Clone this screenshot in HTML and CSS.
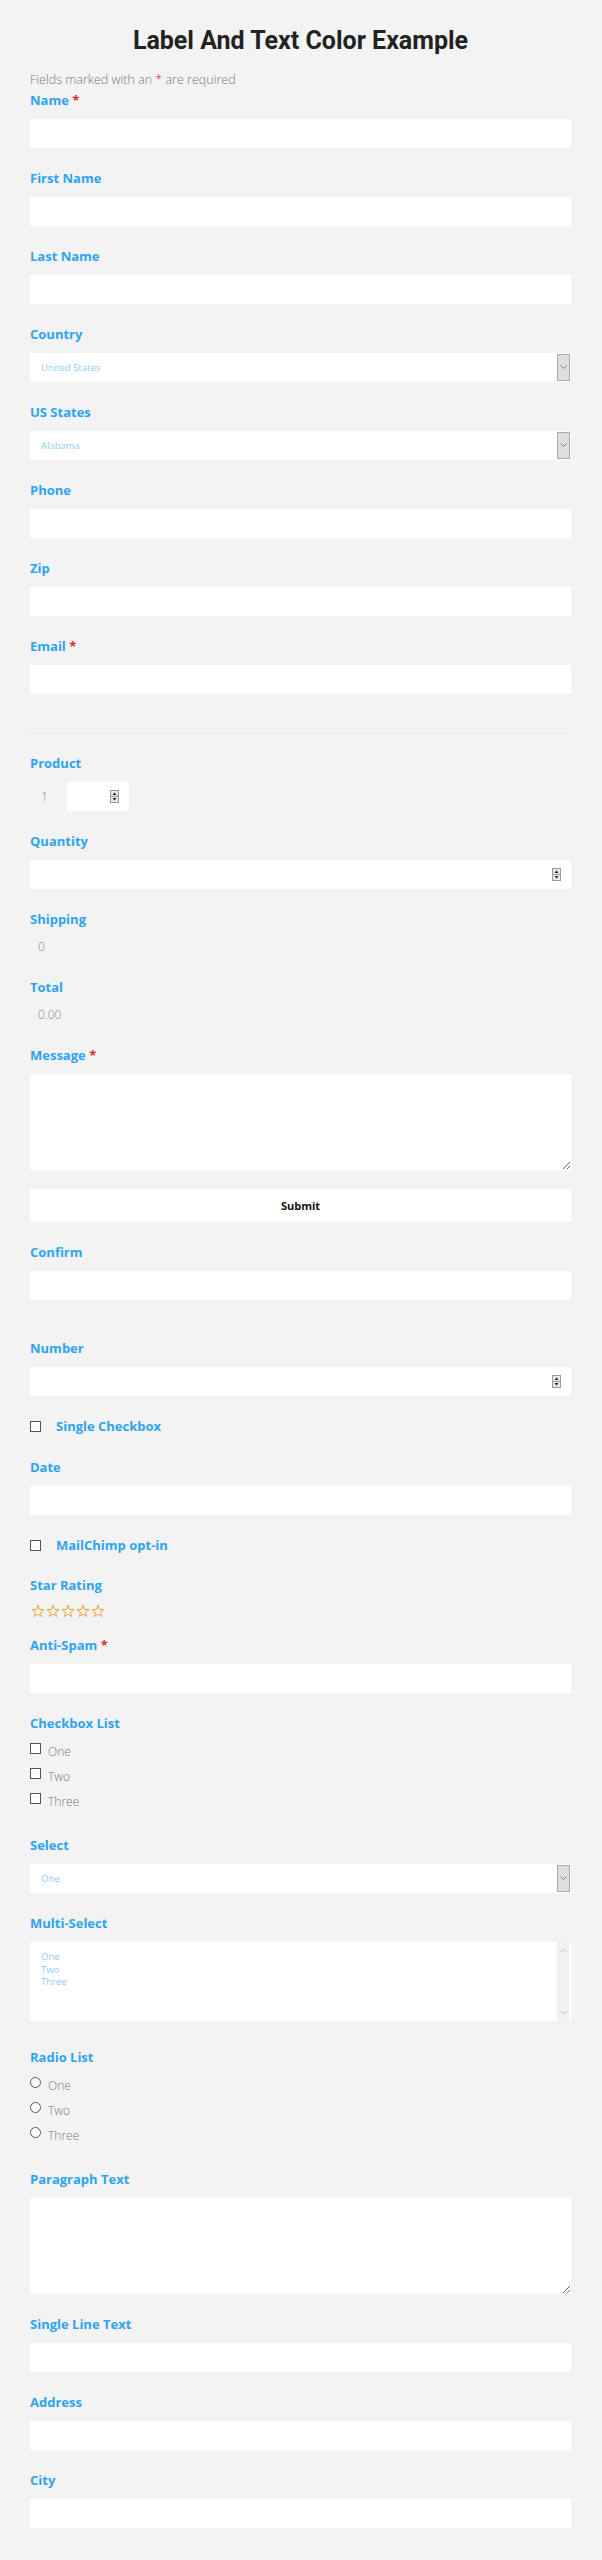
FILE: index.html
```html
<!DOCTYPE html>
<html>

<head>
    <meta name="viewport" content="width=device-width, initial-scale=1.0">
    <title>Label And Text Color Example</title>
    <link rel="stylesheet" href="styles.css">
</head>

<body>
    <div class="page">
        <h1 class="title">Label And Text Color Example</h1>
        <p class="note">Fields marked with an <span class="req">*</span> are required</p>

        <form class="form" action="">
            <div class="field">
                <label class="label">Name <span class="req">*</span></label>
                <input class="text-input" type="text">
            </div>
            <div class="field">
                <label class="label">First Name</label>
                <input class="text-input" type="text">
            </div>
            <div class="field">
                <label class="label">Last Name</label>
                <input class="text-input" type="text">
            </div>
            <div class="field">
                <label class="label">Country</label>
                <div class="select-box">
                    <select class="select"><option>United States</option></select>
                    <span class="select-arrow"><svg width="7" height="5" viewBox="0 0 7 5"><path d="M0.5 0.5 L3.5 3.5 L6.5 0.5" fill="none" stroke="#7a7a7a"/></svg></span>
                </div>
            </div>
            <div class="field">
                <label class="label">US States</label>
                <div class="select-box">
                    <select class="select"><option>Alabama</option></select>
                    <span class="select-arrow"><svg width="7" height="5" viewBox="0 0 7 5"><path d="M0.5 0.5 L3.5 3.5 L6.5 0.5" fill="none" stroke="#7a7a7a"/></svg></span>
                </div>
            </div>
            <div class="field">
                <label class="label">Phone</label>
                <input class="text-input" type="text">
            </div>
            <div class="field">
                <label class="label">Zip</label>
                <input class="text-input" type="text">
            </div>
            <div class="field">
                <label class="label">Email <span class="req">*</span></label>
                <input class="text-input" type="text">
            </div>

            <div class="divider"></div>

            <div class="field">
                <label class="label">Product</label>
                <div class="product-row">
                    <span class="product-price">1</span>
                    <div class="num-box num-small">
                        <input class="num-input" type="number">
                        <svg class="spin" width="9" height="13" viewBox="0 0 9 13"><rect x="0.5" y="0.5" width="8" height="12" fill="#e8e8e8" stroke="#9a9a9a"/><line x1="0.5" y1="6.5" x2="8.5" y2="6.5" stroke="#9a9a9a"/><path d="M4.5 2.5 L6.5 5 L2.5 5Z M4.5 10.5 L6.5 8 L2.5 8Z" fill="#222"/></svg>
                    </div>
                </div>
            </div>
            <div class="field">
                <label class="label">Quantity</label>
                <div class="num-box">
                    <input class="num-input" type="number">
                    <svg class="spin" width="9" height="13" viewBox="0 0 9 13"><rect x="0.5" y="0.5" width="8" height="12" fill="#e8e8e8" stroke="#9a9a9a"/><line x1="0.5" y1="6.5" x2="8.5" y2="6.5" stroke="#9a9a9a"/><path d="M4.5 2.5 L6.5 5 L2.5 5Z M4.5 10.5 L6.5 8 L2.5 8Z" fill="#222"/></svg>
                </div>
            </div>
            <div class="field">
                <label class="label">Shipping</label>
                <div class="field-value">0</div>
            </div>
            <div class="field">
                <label class="label">Total</label>
                <div class="field-value">0.00</div>
            </div>
            <div class="field field-tight">
                <label class="label">Message <span class="req">*</span></label>
                <textarea class="textarea"></textarea>
            </div>
            <div class="field">
                <button class="submit" type="button">Submit</button>
            </div>
            <div class="field field-wide">
                <label class="label">Confirm</label>
                <input class="text-input" type="text">
            </div>
            <div class="field field-check">
                <label class="label">Number</label>
                <div class="num-box">
                    <input class="num-input" type="number">
                    <svg class="spin" width="9" height="13" viewBox="0 0 9 13"><rect x="0.5" y="0.5" width="8" height="12" fill="#e8e8e8" stroke="#9a9a9a"/><line x1="0.5" y1="6.5" x2="8.5" y2="6.5" stroke="#9a9a9a"/><path d="M4.5 2.5 L6.5 5 L2.5 5Z M4.5 10.5 L6.5 8 L2.5 8Z" fill="#222"/></svg>
                </div>
            </div>
            <div class="check-row after-check">
                <input class="box" type="checkbox">
                <label class="label label-inline">Single Checkbox</label>
            </div>
            <div class="field field-check">
                <label class="label">Date</label>
                <input class="text-input" type="text">
            </div>
            <div class="check-row">
                <input class="box" type="checkbox">
                <label class="label label-inline">MailChimp opt-in</label>
            </div>
            <div class="field field-stars">
                <label class="label label-stars">Star Rating</label>
                <div class="stars">
                    <svg width="14" height="14" viewBox="0 0 14 14"><polygon points="7,1.2 8.53,5.4 12.99,5.55 9.47,8.3 10.7,12.6 7,10.1 3.3,12.6 4.53,8.3 1.01,5.55 5.47,5.4" fill="none" stroke="#eea43a"/></svg>
                    <svg width="14" height="14" viewBox="0 0 14 14"><polygon points="7,1.2 8.53,5.4 12.99,5.55 9.47,8.3 10.7,12.6 7,10.1 3.3,12.6 4.53,8.3 1.01,5.55 5.47,5.4" fill="none" stroke="#eea43a"/></svg>
                    <svg width="14" height="14" viewBox="0 0 14 14"><polygon points="7,1.2 8.53,5.4 12.99,5.55 9.47,8.3 10.7,12.6 7,10.1 3.3,12.6 4.53,8.3 1.01,5.55 5.47,5.4" fill="none" stroke="#eea43a"/></svg>
                    <svg width="14" height="14" viewBox="0 0 14 14"><polygon points="7,1.2 8.53,5.4 12.99,5.55 9.47,8.3 10.7,12.6 7,10.1 3.3,12.6 4.53,8.3 1.01,5.55 5.47,5.4" fill="none" stroke="#eea43a"/></svg>
                    <svg width="14" height="14" viewBox="0 0 14 14"><polygon points="7,1.2 8.53,5.4 12.99,5.55 9.47,8.3 10.7,12.6 7,10.1 3.3,12.6 4.53,8.3 1.01,5.55 5.47,5.4" fill="none" stroke="#eea43a"/></svg>
                </div>
            </div>
            <div class="field">
                <label class="label">Anti-Spam <span class="req">*</span></label>
                <input class="text-input" type="text">
            </div>
            <div class="field field-list">
                <label class="label">Checkbox List</label>
                <div class="choice-list">
                    <div class="choice"><input class="box" type="checkbox"><span>One</span></div>
                    <div class="choice"><input class="box" type="checkbox"><span>Two</span></div>
                    <div class="choice"><input class="box" type="checkbox"><span>Three</span></div>
                </div>
            </div>
            <div class="field">
                <label class="label">Select</label>
                <div class="select-box">
                    <select class="select"><option>One</option></select>
                    <span class="select-arrow"><svg width="7" height="5" viewBox="0 0 7 5"><path d="M0.5 0.5 L3.5 3.5 L6.5 0.5" fill="none" stroke="#7a7a7a"/></svg></span>
                </div>
            </div>
            <div class="field field-multi">
                <label class="label">Multi-Select</label>
                <div class="listbox">
                    <div class="listbox-options">
                        <div>One</div>
                        <div>Two</div>
                        <div>Three</div>
                    </div>
                    <div class="listbox-scroll">
                        <svg width="7" height="5" viewBox="0 0 7 5"><path d="M0.5 4 L3.5 1 L6.5 4" fill="none" stroke="#b8b8b8"/></svg>
                        <svg width="7" height="5" viewBox="0 0 7 5"><path d="M0.5 1 L3.5 4 L6.5 1" fill="none" stroke="#b8b8b8"/></svg>
                    </div>
                </div>
            </div>
            <div class="field field-list">
                <label class="label">Radio List</label>
                <div class="choice-list">
                    <div class="choice"><input class="box round" type="radio" name="radio"><span>One</span></div>
                    <div class="choice"><input class="box round" type="radio" name="radio"><span>Two</span></div>
                    <div class="choice"><input class="box round" type="radio" name="radio"><span>Three</span></div>
                </div>
            </div>
            <div class="field">
                <label class="label">Paragraph Text</label>
                <textarea class="textarea"></textarea>
            </div>
            <div class="field">
                <label class="label">Single Line Text</label>
                <input class="text-input" type="text">
            </div>
            <div class="field">
                <label class="label">Address</label>
                <input class="text-input" type="text">
            </div>
            <div class="field field-last">
                <label class="label">City</label>
                <input class="text-input" type="text">
            </div>
        </form>
    </div>
</body>

</html>
```

FILE: styles.css
```css
body {
    margin: 0;
    background: #f3f3f3;
    font-family: "Open Sans", "Liberation Sans", sans-serif;
}

.page {
    padding: 26px 31px 30px 30px;
}

.title {
    margin: 0 0 15px;
    font-family: Roboto, "Liberation Sans", sans-serif;
    font-size: 25px;
    line-height: 30px;
    font-weight: 700;
    color: #222;
    text-align: center;
}

.note {
    margin: 0 0 2px;
    font-size: 12.5px;
    line-height: 18px;
    font-weight: 300;
    color: #777;
}

.req {
    color: #e3262b;
}

.form {
    margin: 0;
}

.field {
    margin-bottom: 21px;
}

.field-tight {
    margin-bottom: 19px;
}

.field-wide {
    margin-bottom: 39px;
}

.field-check {
    margin-bottom: 20px;
}

.field-stars {
    margin-bottom: 16px;
}

.field-list {
    margin-bottom: 22px;
}

.field-multi {
    margin-bottom: 27px;
}

.field-last {
    margin-bottom: 0;
}

.label {
    display: block;
    margin-bottom: 10px;
    font-size: 13px;
    line-height: 18px;
    font-weight: 700;
    color: #2ea3f2;
}

.label-inline {
    margin: 0;
}

.label-stars {
    margin-bottom: 8px;
}

.text-input {
    display: block;
    width: 100%;
    height: 29px;
    box-sizing: border-box;
    border: none;
    background: #fff;
    padding: 0 11px;
    font-family: inherit;
    font-size: 12px;
    color: #8fcdf3;
    outline: none;
}

.select-box {
    display: flex;
    height: 29px;
    box-sizing: border-box;
    padding: 1px 1px 1px 0;
    background: #fff;
}

.select {
    flex-grow: 1;
    -webkit-appearance: none;
    appearance: none;
    border: none;
    background: transparent;
    padding: 0 11px;
    font-family: inherit;
    font-size: 9.5px;
    color: #8fcdf3;
    outline: none;
}

.select-arrow {
    width: 13px;
    box-sizing: border-box;
    border: 1px solid #ababab;
    background: #dedede;
    display: flex;
    align-items: center;
    justify-content: center;
}

.divider {
    height: 1px;
    background: #e9e9e9;
    margin: 39px 3px 20px 0;
}

.product-row {
    display: flex;
    align-items: center;
    height: 29px;
}

.product-price {
    width: 37px;
    box-sizing: border-box;
    padding-left: 11px;
    font-size: 12px;
    font-weight: 300;
    color: #888;
}

.num-box {
    display: flex;
    align-items: center;
    height: 29px;
    background: #fff;
}

.num-small {
    width: 62px;
}

.num-input {
    flex-grow: 1;
    min-width: 0;
    height: 100%;
    border: none;
    background: transparent;
    padding: 0 11px;
    font-family: inherit;
    outline: none;
    -moz-appearance: textfield;
}

.num-input::-webkit-inner-spin-button,
.num-input::-webkit-outer-spin-button {
    -webkit-appearance: none;
    margin: 0;
}

.spin {
    flex-shrink: 0;
    margin-right: 10px;
}

.field-value {
    margin-top: -1px;
    padding-left: 8px;
    font-size: 12px;
    line-height: 20px;
    font-weight: 300;
    color: #888;
}

.textarea {
    display: block;
    width: 100%;
    height: 96px;
    box-sizing: border-box;
    border: none;
    background: #fff;
    padding: 8px 11px;
    font-family: inherit;
    resize: vertical;
    outline: none;
}

.submit {
    display: block;
    width: 100%;
    height: 33px;
    border: none;
    background: #fff;
    font-family: "Open Sans", "Liberation Sans", sans-serif;
    font-size: 11px;
    font-weight: 700;
    color: #111;
}

.check-row {
    display: flex;
    align-items: center;
    gap: 15px;
    height: 20px;
    margin-bottom: 21px;
}

.after-check {
    margin-bottom: 22px;
}

.box {
    -webkit-appearance: none;
    appearance: none;
    flex-shrink: 0;
    width: 11px;
    height: 11px;
    margin: 0;
    border: 1px solid #555;
    background: #fff;
}

.round {
    border-radius: 50%;
}

.stars {
    display: flex;
    align-items: center;
    gap: 1px;
    height: 18px;
    padding-left: 1px;
}

.choice-list {
    margin-top: -3px;
}

.choice {
    display: flex;
    align-items: flex-start;
    gap: 7px;
    height: 25px;
    font-size: 12px;
    line-height: 25px;
    font-weight: 300;
    color: #777;
}

.choice .box {
    margin-top: 4px;
}

.listbox {
    display: flex;
    height: 79px;
    background: #fff;
}

.listbox-options {
    flex-grow: 1;
    padding: 9px 11px;
    font-size: 9.5px;
    line-height: 12.5px;
    color: #8fcdf3;
}

.listbox-scroll {
    width: 12px;
    margin-right: 2px;
    background: #f1f1f1;
    display: flex;
    flex-direction: column;
    justify-content: space-between;
    align-items: center;
    padding: 6px 0;
}
```
